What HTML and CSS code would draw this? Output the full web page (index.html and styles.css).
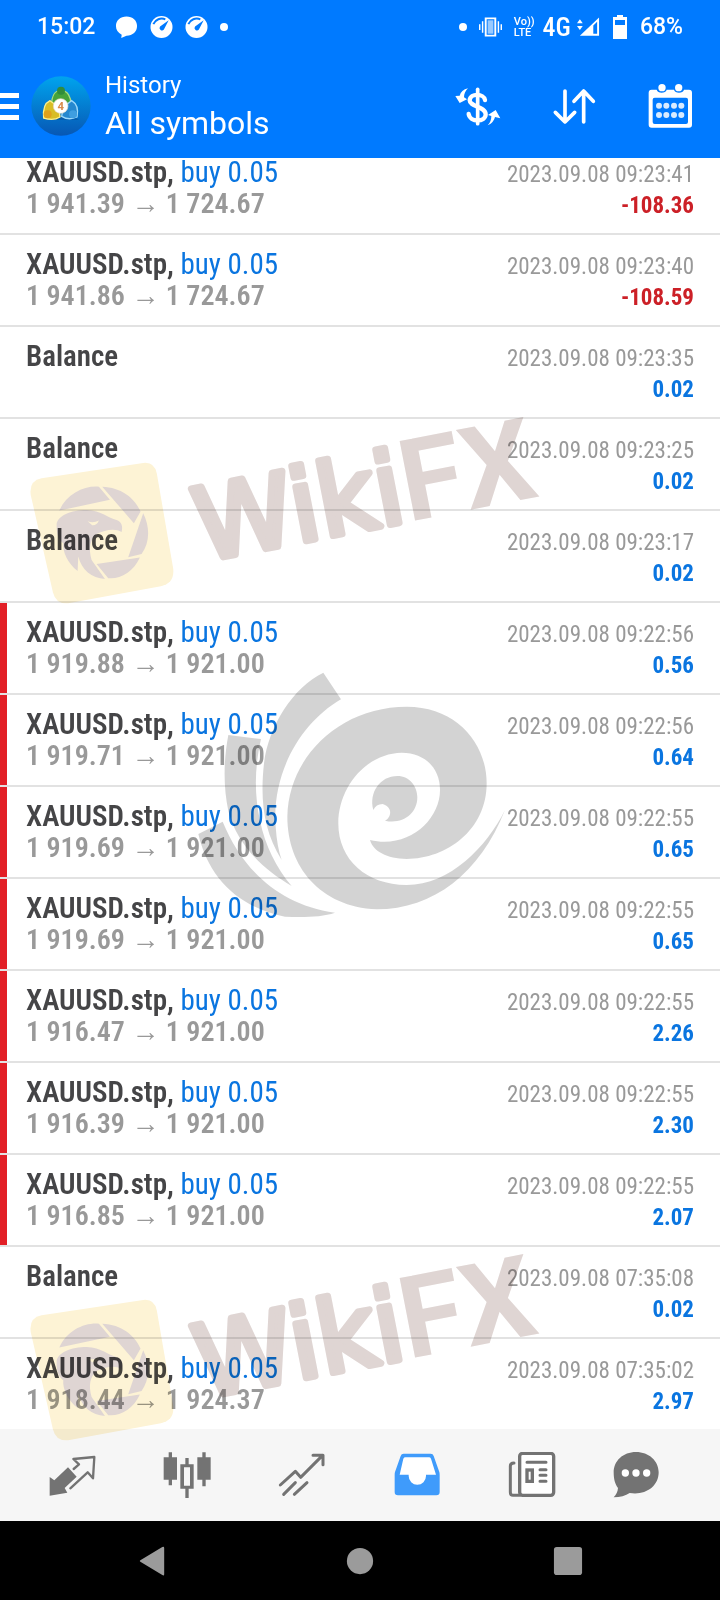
FILE: index.html
```
<!DOCTYPE html>
<html lang="en">

<head>
    <meta charset="UTF-8">
    <meta name="viewport" content="width=device-width, initial-scale=1.0">
    <title>History</title>
    <link rel="stylesheet" href="styles.css">
</head>

<body>

<!-- Header -->
<header class="header">
    <div class="status">
        <div class="status-side">
            <span class="clock">15:02</span>
            <svg class="status-icon" viewBox="0 0 24 24"><path d="M12 1C5.500 1 1 5 1 11c0 4 2 7 6 9l-.5 3.500L12 21c6.500 0 11-4 11-10S18.500 1 12 1z"/></svg>
            <svg class="status-icon" viewBox="0 0 24 24"><circle cx="12" cy="12" r="11.500"/><path class="cut-line" d="M3.500 9A9.500 9.500 0 0 1 16 4"/><path class="cut" d="M19.500 5l-5 9.500a2.500 2.500 0 0 1-4-3z"/></svg>
            <svg class="status-icon" viewBox="0 0 24 24"><circle cx="12" cy="12" r="11.500"/><path class="cut-line" d="M3.500 9A9.500 9.500 0 0 1 16 4"/><path class="cut" d="M19.500 5l-5 9.500a2.500 2.500 0 0 1-4-3z"/></svg>
            <span class="dot"></span>
        </div>
        <div class="status-side">
            <span class="dot"></span>
            <svg class="status-icon" viewBox="0 0 24 24"><path d="M6 2h12v20H6zM8 4v16h8V4z" fill-rule="evenodd"/><path d="M9 5h6v14H9z" opacity=".6"/><path d="M3 6h1.500v12H3zM19.500 6H21v12h-1.500zM0 9h1.500v6H0zM22.500 9H24v6h-1.500z"/></svg>
            <span class="volte"><span>Vo))</span><span>LTE</span></span>
            <span class="network">4G</span>
            <svg class="status-icon" viewBox="0 0 24 24"><path d="M0 8l3-4 3 4zM0 11l3 4 3-4zM3 21L23 2v19z"/><path class="cut" d="M17 10.500L21 6.500v12.500h-4z"/></svg>
            <svg class="battery" viewBox="0 0 16 24"><path d="M5 0h6v2h4v22H1V2h4z"/><path class="cut" d="M3 5h10v5H3z"/></svg>
            <span class="clock">68%</span>
        </div>
    </div>

    <div class="appbar">
        <button type="button" class="menu-button" aria-label="Menu"><span></span><span></span><span></span></button>
        <svg class="app-logo" viewBox="0 0 180 180">
            <defs>
                <linearGradient id="logoSky" x1="0" y1="0" x2="0" y2="1">
                    <stop offset="0" stop-color="#00a4ee"/>
                    <stop offset="1" stop-color="#0757b4"/>
                </linearGradient>
            </defs>
            <circle cx="90" cy="90" r="89" fill="url(#logoSky)"/>
            <path d="M38 131h106l-24-12H62z" fill="#06488c" opacity=".5"/>
            <path d="M90 43c-20 0-28 20-28 42l28 8 30-8c0-22-10-42-30-42z" fill="#46a33b" stroke="#a6dc83" stroke-width="4"/>
            <circle cx="90" cy="44" r="12" fill="#318c3c"/>
            <path d="M57 74c-17 8-21 32-19 52 17 6 36 5 49-3l-4-30z" fill="#d8bd26" stroke="#fff08a" stroke-width="4"/>
            <circle cx="50" cy="115" r="12" fill="#e0a11b"/>
            <path d="M122 74c17 10 20 30 16 49-15 7-33 6-46-2l5-28z" fill="#2588cf" stroke="#9bd8fb" stroke-width="4"/>
            <circle cx="126" cy="115" r="12" fill="#3f9ee0"/>
            <circle cx="89" cy="90" r="22" fill="#fff" stroke="#e3d8c6" stroke-width="2"/>
            <text x="89" y="102" text-anchor="middle" class="logo-number">4</text>
        </svg>
        <div class="titles">
            <h2>History</h2>
            <h1>All symbols</h1>
        </div>
        <div class="actions">
            <button type="button" aria-label="Symbol">
                <svg viewBox="281 243 144 144">
                    <path class="line" d="M352 265v103" stroke-width="11"/>
                    <path class="line" d="M374 297c-3-19-44-22-46 1 0 20 48 17 48 42 0 24-47 25-51-1" stroke-width="13"/>
                    <path d="M323 262c-14 3-22 11-25 22l-13 1 13 21 22-11-9-6c0-10 4-19 12-27zM382 373c14-6 19-15 22-25l16 4-14-25-23 15 10 3c0 10-3 20-11 28z"/>
                </svg>
            </button>
            <button type="button" aria-label="Sort">
                <svg viewBox="571 243 144 144">
                    <path class="line" d="M616 270v92M587 334l29 29 29-29M672 363v-92M643 301l29-31 29 31" stroke-width="11"/>
                </svg>
            </button>
            <button type="button" aria-label="Period">
                <svg viewBox="859 243 144 144">
                    <path d="M876 266h15c2 12 28 12 30 0h22c2 12 28 12 30 0h15q9 0 9 9v96q0 9-9 9H876q-9 0-9-9v-96q0-9 9-9zM885 290q-6 0-6 6v67q0 6 6 6h94q6 0 6-6v-67q0-6-6-6z" fill-rule="evenodd"/>
                    <circle cx="907" cy="260" r="11"/><circle cx="957" cy="260" r="11"/>
                    <g opacity=".85">
                        <circle cx="898" cy="314" r="9"/><circle cx="920" cy="314" r="9"/><circle cx="943" cy="314" r="9"/><circle cx="965" cy="314" r="9"/>
                        <circle cx="898" cy="342" r="9"/><circle cx="920" cy="342" r="9"/><circle cx="943" cy="342" r="9"/><circle cx="965" cy="342" r="9"/>
                    </g>
                </svg>
            </button>
        </div>
    </div>
</header>

<!-- Deals, scrolled to the end -->
<main class="history">
    <ul class="deals">
        <li>
            <span class="name">XAUUSD.stp, <span class="volume">buy 0.05</span></span>
            <time>2023.09.08 09:23:41</time>
            <span class="price">1 941.39 <i>→</i> 1 724.67</span>
            <span class="profit loss">-108.36</span>
        </li>
        <li>
            <span class="name">XAUUSD.stp, <span class="volume">buy 0.05</span></span>
            <time>2023.09.08 09:23:40</time>
            <span class="price">1 941.86 <i>→</i> 1 724.67</span>
            <span class="profit loss">-108.59</span>
        </li>
        <li>
            <span class="name">Balance</span>
            <time>2023.09.08 09:23:35</time>
            <span class="price"></span>
            <span class="profit">0.02</span>
        </li>
        <li>
            <span class="name">Balance</span>
            <time>2023.09.08 09:23:25</time>
            <span class="price"></span>
            <span class="profit">0.02</span>
        </li>
        <li>
            <span class="name">Balance</span>
            <time>2023.09.08 09:23:17</time>
            <span class="price"></span>
            <span class="profit">0.02</span>
        </li>
        <li class="marked">
            <span class="name">XAUUSD.stp, <span class="volume">buy 0.05</span></span>
            <time>2023.09.08 09:22:56</time>
            <span class="price">1 919.88 <i>→</i> 1 921.00</span>
            <span class="profit">0.56</span>
        </li>
        <li class="marked">
            <span class="name">XAUUSD.stp, <span class="volume">buy 0.05</span></span>
            <time>2023.09.08 09:22:56</time>
            <span class="price">1 919.71 <i>→</i> 1 921.00</span>
            <span class="profit">0.64</span>
        </li>
        <li class="marked">
            <span class="name">XAUUSD.stp, <span class="volume">buy 0.05</span></span>
            <time>2023.09.08 09:22:55</time>
            <span class="price">1 919.69 <i>→</i> 1 921.00</span>
            <span class="profit">0.65</span>
        </li>
        <li class="marked">
            <span class="name">XAUUSD.stp, <span class="volume">buy 0.05</span></span>
            <time>2023.09.08 09:22:55</time>
            <span class="price">1 919.69 <i>→</i> 1 921.00</span>
            <span class="profit">0.65</span>
        </li>
        <li class="marked">
            <span class="name">XAUUSD.stp, <span class="volume">buy 0.05</span></span>
            <time>2023.09.08 09:22:55</time>
            <span class="price">1 916.47 <i>→</i> 1 921.00</span>
            <span class="profit">2.26</span>
        </li>
        <li class="marked">
            <span class="name">XAUUSD.stp, <span class="volume">buy 0.05</span></span>
            <time>2023.09.08 09:22:55</time>
            <span class="price">1 916.39 <i>→</i> 1 921.00</span>
            <span class="profit">2.30</span>
        </li>
        <li class="marked">
            <span class="name">XAUUSD.stp, <span class="volume">buy 0.05</span></span>
            <time>2023.09.08 09:22:55</time>
            <span class="price">1 916.85 <i>→</i> 1 921.00</span>
            <span class="profit">2.07</span>
        </li>
        <li>
            <span class="name">Balance</span>
            <time>2023.09.08 07:35:08</time>
            <span class="price"></span>
            <span class="profit">0.02</span>
        </li>
        <li>
            <span class="name">XAUUSD.stp, <span class="volume">buy 0.05</span></span>
            <time>2023.09.08 07:35:02</time>
            <span class="price">1 918.44 <i>→</i> 1 924.37</span>
            <span class="profit">2.97</span>
        </li>
    </ul>
</main>

<!-- Tabs -->
<nav class="tabs">
    <button type="button" aria-label="Quotes">
        <svg viewBox="145 94 144 144">
            <path d="M205 140l26 28-36 34 8 14-53 9v-56l14 10z"/>
            <path d="M222 145l16-14-17-16 63-6-4 64-16-18-52 48" fill="none" stroke="#f6f6f6" stroke-width="15"/>
            <path class="line" d="M222 145l16-14-17-16 63-6-4 64-16-18-52 48" stroke-width="7"/>
        </svg>
    </button>
    <button type="button" aria-label="Charts">
        <svg viewBox="490 94 144 144">
            <path d="M507 95h10v15h15v67h-15v17h-10v-17h-15v-67h15zM608 95h10v15h15v67h-15v20h-10v-20h-15v-67h15zM557 112h10v19h15v73h-15v28h-10v-28h-15v-73h15zM553 140v55h18v-55z" fill-rule="evenodd"/>
        </svg>
    </button>
    <button type="button" aria-label="Trade">
        <svg viewBox="835 94 144 144">
            <path class="line" d="M842 193l45-41 16 18 65-65M940 104h30v28M852 221l35-35M884 221l38-35" stroke-width="9"/>
        </svg>
    </button>
    <button type="button" class="active" aria-label="History">
        <svg viewBox="100 94 144 144">
            <path d="M132 99h81q7 0 9 7l17 48q1 3 1 8v52q0 10-10 10H115q-10 0-10-10v-52q0-5 1-8l17-48q2-7 9-7z"/>
            <path d="M137 110h71q4 0 6 4l15 48h-30v4a26 26 0 0 1-52 0v-4h-27l11-48q2-4 6-4z" fill="#fff"/>
        </svg>
    </button>
    <button type="button" aria-label="News">
        <svg viewBox="448 94 144 144">
            <rect x="483" y="98" width="102" height="126" rx="9" fill="#fff" stroke="currentColor" stroke-width="10"/>
            <path class="line" d="M483 224h-20q-8 0-8-9v-79q0-9 11-9M505 125h57M544 147h18M544 164h18M544 182h18" stroke-width="9"/>
            <rect x="505" y="148" width="16" height="34" fill="none" stroke="currentColor" stroke-width="10"/>
        </svg>
    </button>
    <button type="button" aria-label="Messages">
        <svg viewBox="756 94 144 144">
            <path d="M828 94c39 0 68 27 68 61 0 44-42 70-87 62-12 8-29 13-48 13 8-8 12-17 13-28-9-12-13-26-13-47 0-34 28-61 67-61z"/>
            <circle cx="796" cy="157" r="11" fill="#fff"/><circle cx="828" cy="157" r="11" fill="#fff"/><circle cx="860" cy="157" r="11" fill="#fff"/>
        </svg>
    </button>
</nav>

<div class="system-keys">
    <button type="button" aria-label="Back"><svg viewBox="0 0 32 32"><path d="M29 2v28q0 2-2 1L4 17q-2-1 0-2L27 1q2-1 2 1z"/></svg></button>
    <button type="button" aria-label="Home"><svg viewBox="0 0 32 32"><circle cx="16" cy="16" r="14"/></svg></button>
    <button type="button" aria-label="Recent"><svg viewBox="0 0 32 32"><rect x="1" y="1" width="30" height="30" rx="3"/></svg></button>
</div>

<!-- Watermarks over the page -->
<svg class="watermark watermark-top" viewBox="0 0 560 230">
    <g id="wikifx">
        <g transform="translate(25 60) scale(.333)">
            <path class="gold" d="M50 55L355 9q34-4 41 32l49 285q5 44-37 53L130 430q-37 4-46-32L17 104q-5-42 33-49z"/>
            <path class="brown" d="M103 152C125 100 180 76 222 80l33 39zM232 80c58 2 98 35 115 75l-20 35zM355 160c21 42 20 88-5 122l-40 10zM345 293c-20 44-60 66-95 62l-35-43z"/>
            <path class="brown" d="M95 195c0-28 45-45 90-45 45 2 65 25 90 30 15 5 20 20 15 36-20-12-50-6-75 6-20 18-25 43-15 78l40 57c-40-2-70-27-80-67l-2 43c-30-22-46-60-43-83-18-14-20-35-20-55z"/>
            <path class="gold" d="M188 184q17 6 34-2-6 15-20 14z"/>
        </g>
        <text class="brand brand-round" transform="translate(202 161) rotate(-11)">Wiki</text>
        <text class="brand" transform="translate(408 122) rotate(-11)">FX</text>
    </g>
</svg>
<svg class="watermark watermark-bottom" viewBox="0 0 560 230"><use href="#wikifx"/></svg>

<svg class="swirl" viewBox="0 0 1020 900">
    <path d="M430 98l53 80C360 250 275 400 287 560q4 60 18 100C250 570 240 480 252 370 265 260 340 140 430 98z"/>
    <path d="M145 285l98 12c-20 90-20 165-3 245 16 75 48 140 95 196-95-55-165-130-190-225-15-70-15-150 0-228z"/>
    <path d="M55 582l73-37c60 145 170 250 337 273-40 14-95 14-150 12C170 800 85 710 55 582z"/>
    <path d="M975 510C900 700 760 808 590 808 420 800 322 680 322 530 325 350 480 200 680 200c150 0 240 110 240 230 0 140-120 227-240 227-60-2-100-22-110-57 115 28 210-60 210-150 0-65-45-112-115-112-105 2-190 102-190 212s85 185 205 185c130 0 240-115 295-225z"/>
    <path d="M580 510c-14-52 20-102 72-102 38 0 60 32 60 64 0 50-45 82-97 70 20-10 24-40-7-50q-20 0-28 18z"/>
</svg>

</body>

</html>
```
FILE: styles.css
```
* {
    box-sizing: border-box;
}

body {
    position: relative;
    display: flex;
    flex-direction: column;
    height: 100vh;
    margin: 0;
    overflow: hidden;
    background-color: #fff;
    font-family: Roboto, Arial, sans-serif;
}

button {
    display: flex;
    align-items: center;
    justify-content: center;
    padding: 0;
    border: none;
    background: none;
    color: inherit;
    cursor: pointer;
}

svg {
    display: block;
    fill: currentColor;
}

.line {
    fill: none;
    stroke: currentColor;
    stroke-linecap: round;
    stroke-linejoin: round;
}

/* Header */
.header {
    flex: none;
    background-color: #007aff;
    color: #fff;
}

.status {
    display: flex;
    justify-content: space-between;
    height: 54px;
    padding: 0 37px;
}

.status-side {
    display: flex;
    align-items: center;
    gap: 12px;
}

.clock {
    font-size: 23px;
    font-weight: 500;
    line-height: 28px;
}

.status-side:first-child .clock {
    margin-right: 8px;
}

.status-icon {
    width: 23px;
    height: 24px;
}

.battery {
    width: 16px;
    height: 24px;
}

.cut {
    fill: #007aff;
}

.cut-line {
    fill: none;
    stroke: #007aff;
    stroke-width: 2;
}

.dot {
    width: 8px;
    height: 8px;
    border-radius: 50%;
    background-color: #fff;
}

.volte {
    display: flex;
    flex-direction: column;
    font-family: Roboto, Arial, sans-serif;
    font-size: 11px;
    font-weight: 500;
    line-height: 11px;
}

.network {
    margin: 0 -6px 0 -4px;
    font-family: "Roboto Condensed", Roboto, Arial, sans-serif;
    font-size: 26px;
    font-weight: 500;
    line-height: 28px;
}

.appbar {
    display: flex;
    align-items: center;
    height: 104px;
    padding-right: 26px;
}

.menu-button {
    flex-direction: column;
    gap: 6px;
    width: 19px;
    height: 48px;
}

.menu-button span {
    width: 19px;
    height: 5px;
    background-color: #fff;
}

.app-logo {
    width: 60px;
    height: 60px;
    margin: 0 14px 0 12px;
}

.logo-number {
    fill: #d98a4c;
    font-size: 34px;
    font-weight: 700;
}

.titles {
    flex: 1;
    padding-top: 2px;
}

.titles h1,
.titles h2 {
    margin: 0;
    font-weight: 400;
}

.titles h2 {
    font-size: 24px;
    line-height: 32px;
}

.titles h1 {
    font-size: 32px;
    line-height: 44px;
}

.actions {
    display: flex;
    gap: 48px;
}

.actions svg,
.tabs svg {
    width: 48px;
    height: 48px;
}

/* Deals */
.history {
    display: flex;
    flex: 1;
    flex-direction: column;
    justify-content: flex-end;
    min-height: 0;
    overflow: hidden;
    font-family: "Roboto Condensed", "Liberation Sans Narrow", Roboto, Arial, sans-serif;
}

.deals {
    margin: 0;
    padding: 0;
    list-style: none;
}

.deals li {
    display: grid;
    grid-template-columns: 1fr auto;
    grid-auto-rows: 32px;
    align-items: baseline;
    padding: 13px 26px;
    border-bottom: 2px solid #e2e2e2;
    line-height: 32px;
}

.deals li:last-child {
    border-bottom-color: #f6f6f6;
}

.deals .marked {
    box-shadow: inset 7px 0 #e21f26;
}

.name {
    color: #454547;
    font-size: 29px;
    font-weight: 600;
}

.volume {
    color: #0a75e0;
    font-weight: 400;
}

.deals time {
    color: #999;
    font-size: 23px;
}

.price {
    color: #999;
    font-size: 28px;
    font-weight: 600;
}

.price:empty::before {
    content: "\200b";
}

.price i {
    font-style: normal;
    font-weight: 400;
}

.profit {
    color: #0a75e0;
    font-size: 23px;
    font-weight: 700;
    text-align: right;
}

.loss {
    color: #cc2027;
}

/* Bottom bars */
.tabs {
    display: grid;
    flex: none;
    grid-template-columns: repeat(5, 115fr) 93fr;
    height: 90px;
    padding: 0 38px 0 14px;
    background-color: #f6f6f6;
    color: #737373;
}

.tabs .active {
    color: #3f9bfb;
}

.system-keys {
    display: grid;
    flex: none;
    grid-template-columns: repeat(3, 1fr);
    height: 79px;
    padding: 0 48px;
    background-color: #000;
    color: #9b9b9b;
}

.system-keys svg {
    width: 30px;
    height: 30px;
}

/* Watermarks */
.watermark,
.swirl {
    position: absolute;
    pointer-events: none;
}

.watermark {
    left: 0;
    width: 560px;
    height: 230px;
    mix-blend-mode: multiply;
}

.watermark-top {
    top: 400px;
}

.watermark-bottom {
    top: 1237px;
}

.gold {
    fill: #fdf3d5;
}

.brown {
    fill: #dfd5d3;
}

.brand {
    fill: #dfd5d3;
    font-size: 114px;
    font-weight: 700;
}

.brand-round {
    font-family: "DejaVu Sans", sans-serif;
    font-size: 100px;
    font-weight: 400;
    stroke: #dfd5d3;
    stroke-width: 7;
    stroke-linejoin: round;
}

.swirl {
    top: 640px;
    left: 180px;
    width: 340px;
    height: 300px;
    opacity: 0.17;
}
```
